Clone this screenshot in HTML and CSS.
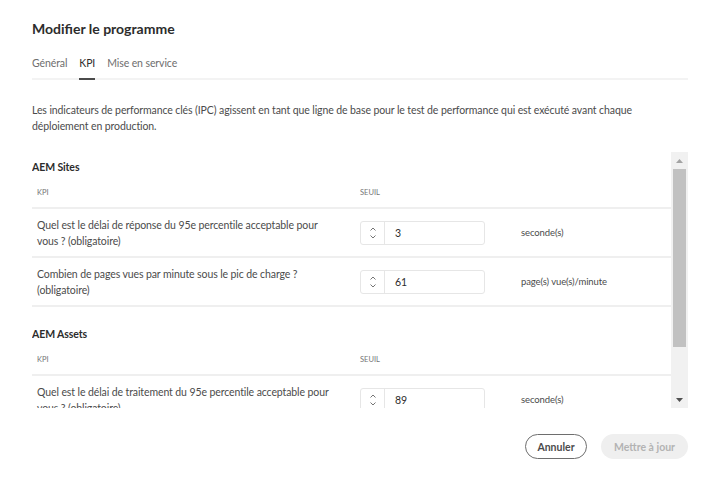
FILE: index.html
```html
<!DOCTYPE html>
<html lang="fr">
<head>
<meta charset="utf-8">
<title>Modifier le programme</title>
<link rel="stylesheet" href="styles.css">
</head>
<body>
<div class="dialog">
  <h1 class="title">Modifier le programme</h1>
  <div class="tabs">
    <div class="tab">Général</div>
    <div class="tab active">KPI</div>
    <div class="tab">Mise en service</div>
  </div>
  <p class="desc">Les indicateurs de performance clés (IPC) agissent en tant que ligne de base pour le test de performance qui est exécuté avant chaque déploiement en production.</p>
  <div class="scroll-area">
    <div class="viewport">
      <section class="group">
        <h2 class="group-title">AEM Sites</h2>
        <div class="thead">
          <div class="c1">KPI</div>
          <div class="c2">SEUIL</div>
        </div>
        <div class="row">
          <div class="c1 q">Quel est le délai de réponse du 95e percentile acceptable pour vous ? (obligatoire)</div>
          <div class="c2 field">
            <div class="stepper">
              <div class="arrows">
                <svg width="8" height="16" viewBox="0 0 8 16"><path d="M1.5 5.5 L4 3 L6.5 5.5" fill="none" stroke="#747474" stroke-width="1"/><path d="M1.5 10.5 L4 13 L6.5 10.5" fill="none" stroke="#747474" stroke-width="1"/></svg>
              </div>
              <div class="value">3</div>
            </div>
            <span class="unit">seconde(s)</span>
          </div>
        </div>
        <div class="row">
          <div class="c1 q">Combien de pages vues par minute sous le pic de charge ? (obligatoire)</div>
          <div class="c2 field">
            <div class="stepper">
              <div class="arrows">
                <svg width="8" height="16" viewBox="0 0 8 16"><path d="M1.5 5.5 L4 3 L6.5 5.5" fill="none" stroke="#747474" stroke-width="1"/><path d="M1.5 10.5 L4 13 L6.5 10.5" fill="none" stroke="#747474" stroke-width="1"/></svg>
              </div>
              <div class="value">61</div>
            </div>
            <span class="unit">page(s) vue(s)/minute</span>
          </div>
        </div>
      </section>
      <section class="group">
        <h2 class="group-title">AEM Assets</h2>
        <div class="thead">
          <div class="c1">KPI</div>
          <div class="c2">SEUIL</div>
        </div>
        <div class="row">
          <div class="c1 q">Quel est le délai de traitement du 95e percentile acceptable pour vous ? (obligatoire)</div>
          <div class="c2 field">
            <div class="stepper">
              <div class="arrows">
                <svg width="8" height="16" viewBox="0 0 8 16"><path d="M1.5 5.5 L4 3 L6.5 5.5" fill="none" stroke="#747474" stroke-width="1"/><path d="M1.5 10.5 L4 13 L6.5 10.5" fill="none" stroke="#747474" stroke-width="1"/></svg>
              </div>
              <div class="value">89</div>
            </div>
            <span class="unit">seconde(s)</span>
          </div>
        </div>
      </section>
    </div>
    <div class="scrollbar">
      <div class="sb-btn">
        <svg width="7" height="4" viewBox="0 0 7 4"><polygon points="0,4 3.5,0 7,4" fill="#a3a3a3"/></svg>
      </div>
      <div class="sb-track"><div class="sb-thumb"></div></div>
      <div class="sb-btn">
        <svg width="7" height="4" viewBox="0 0 7 4"><polygon points="0,0 7,0 3.5,4" fill="#505050"/></svg>
      </div>
    </div>
  </div>
  <div class="footer">
    <button class="btn secondary">Annuler</button>
    <button class="btn disabled">Mettre à jour</button>
  </div>
</div>
</body>
</html>
```
FILE: styles.css
```css
* { box-sizing: border-box; }
html, body { margin: 0; padding: 0; background: #fff; }
body {
  font-family: Lato, "Noto Sans", sans-serif;
  font-size: 10.5px;
  letter-spacing: -0.1px;
  color: #4b4b4b;
}
.dialog {
  width: 720px;
  height: 484px;
  padding: 20px 32px 0 32px;
}
.title {
  margin: 0;
  font-size: 14px;
  line-height: 18px;
  font-weight: 700;
  letter-spacing: 0;
  color: #2c2c2c;
}
.tabs {
  display: flex;
  gap: 12px;
  margin-top: 12px;
  border-bottom: 2px solid #f3f3f3;
}
.tab {
  height: 30px;
  line-height: 26px;
  color: #6e6e6e;
  border-bottom: 2px solid transparent;
  margin-bottom: -2px;
}
.tab.active {
  color: #2c2c2c;
  border-bottom-color: #4b4b4b;
}
.desc {
  margin: 22px 0 0 0;
  line-height: 16px;
  max-width: 640px;
  color: #4b4b4b;
}
.scroll-area {
  display: flex;
  margin-top: 18px;
  height: 256px;
}
.viewport {
  flex: 1;
  min-width: 0;
  overflow: hidden;
  padding-top: 7px;
}
.scrollbar {
  width: 17px;
  flex: none;
  display: flex;
  flex-direction: column;
  background: #f1f1f1;
}
.sb-btn {
  height: 17px;
  flex: none;
  display: flex;
  align-items: center;
  justify-content: center;
}
.sb-btn svg { display: block; }
.sb-track {
  flex: 1;
  padding: 0 2px;
}
.sb-thumb {
  height: 178px;
  background: #c1c1c1;
}
.group-title {
  margin: 0;
  font-size: 10.5px;
  line-height: 16px;
  font-weight: 700;
  color: #2c2c2c;
}
.group + .group .group-title { margin-top: 19px; }
.thead {
  display: flex;
  height: 34px;
  padding-top: 11px;
  font-size: 7.5px;
  line-height: 14px;
  letter-spacing: 0;
  text-transform: uppercase;
  color: #747474;
  border-bottom: 2px solid #efefef;
}
.c1 { width: 323px; flex: none; padding-left: 5px; padding-right: 15px; }
.c2 { padding-left: 5px; }
.row {
  display: flex;
  align-items: center;
  height: 49px;
  border-bottom: 2px solid #efefef;
}
.q { line-height: 16px; }
.field {
  display: flex;
  align-items: center;
}
.stepper {
  display: flex;
  width: 125px;
  height: 24px;
  border: 1px solid #e6e6e6;
  border-radius: 3px;
}
.arrows {
  width: 24px;
  border-right: 1px solid #e6e6e6;
  display: flex;
  align-items: center;
  justify-content: center;
}
.arrows svg { display: block; }
.value {
  flex: 1;
  padding-left: 10px;
  line-height: 22px;
  color: #2c2c2c;
}
.unit {
  margin-left: 36px;
  font-size: 9.5px;
  color: #4b4b4b;
}
.footer {
  display: flex;
  justify-content: flex-end;
  gap: 14px;
  margin-top: 26px;
}
.btn {
  font-family: inherit;
  font-size: 10.5px;
  font-weight: 700;
  height: 25px;
  border-radius: 13px;
  padding: 0;
  white-space: nowrap;
  cursor: pointer;
}
.btn.secondary {
  background: #fff;
  border: 1.5px solid #6e6e6e;
  color: #4b4b4b;
  width: 62px;
}
.btn.disabled {
  background: #efefef;
  border: none;
  color: #b3b3b3;
  width: 87px;
}
```
